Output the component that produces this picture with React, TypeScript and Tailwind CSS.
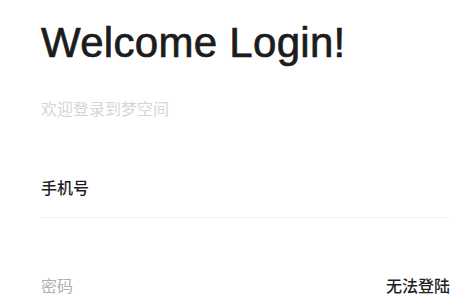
export default function App() {
  const cjk = "font-['Liberation_Sans','Noto_Sans_CJK_SC',sans-serif]";
  return (
    <div className={`w-[450px] h-[300px] overflow-hidden bg-white pl-[41px] ${cjk}`}>
      <h1 className="pt-[19px] text-[42px] leading-[48px] font-normal text-[#1c1c1c] tracking-[0.3px] [-webkit-text-stroke:0.7px_#1c1c1c]">
        Welcome Login!
      </h1>
      <p className="mt-[33px] text-[16px] leading-[20px] text-[#d6d6d6]">欢迎登录到梦空间</p>
      <div className="mt-[59px] border-b border-[#f0f0f0] pb-[18px] text-[16px] leading-[20px] font-medium text-[#1f1f1f]">
        手机号
      </div>
      <div className="mt-[59px] flex items-center justify-between text-[16px] leading-[20px]">
        <span className="text-[#b0b0b0]">密码</span>
        <span className="font-medium text-[#1f1f1f]">无法登陆</span>
      </div>
    </div>
  );
}
